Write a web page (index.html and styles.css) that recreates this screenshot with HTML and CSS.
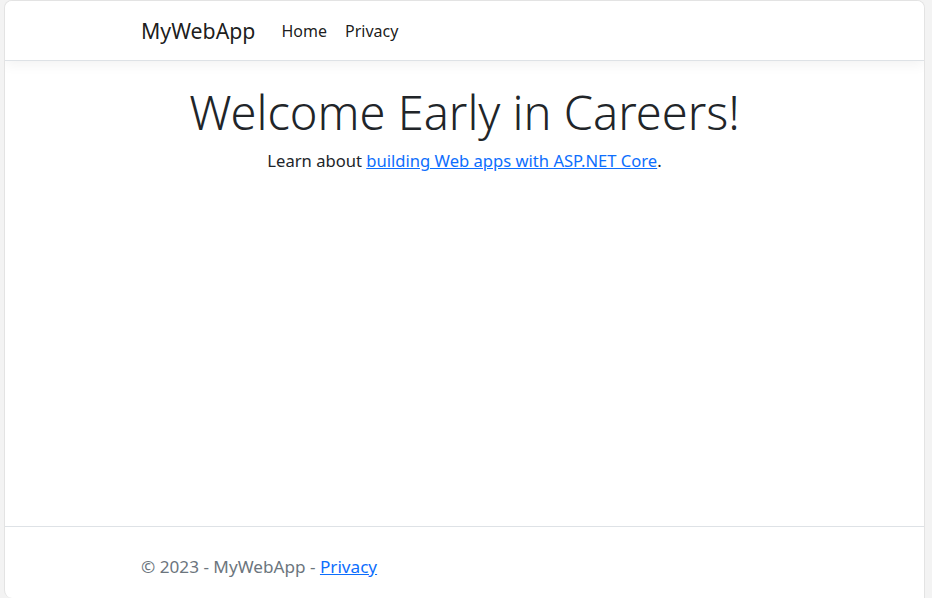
FILE: index.html
```html
<!DOCTYPE html>
<html lang="en">
<head>
<meta charset="utf-8">
<title>Home page - MyWebApp</title>
<link rel="stylesheet" href="styles.css">
</head>
<body>
<div class="window">
  <header>
    <nav class="navbar">
      <div class="container nav-inner">
        <a class="brand" href="#">MyWebApp</a>
        <ul class="nav">
          <li><a class="nav-link" href="#">Home</a></li>
          <li><a class="nav-link" href="#">Privacy</a></li>
        </ul>
      </div>
    </nav>
  </header>
  <main class="container main">
    <div class="center">
      <h1 class="display">Welcome Early in Careers!</h1>
      <p class="lead-text">Learn about <a href="#">building Web apps with ASP.NET Core</a>.</p>
    </div>
  </main>
  <footer class="footer">
    <div class="container">
      &copy; 2023 - MyWebApp - <a href="#">Privacy</a>
    </div>
  </footer>
</div>
</body>
</html>
```
FILE: styles.css
```css
* { box-sizing: border-box; }
html, body { margin: 0; height: 100%; }
body {
  background: #f3f3f3;
  padding: 0 7px 0 4px;
  font-family: "Segoe UI", "Noto Sans", "Open Sans", "Liberation Sans", sans-serif;
  color: #212529;
  font-size: 16px;
}
.window {
  height: 598px;
  background: #fff;
  border: 1px solid #e3e3e3;
  border-bottom: none;
  border-radius: 8px 8px 0 8px;
  display: flex;
  flex-direction: column;
  overflow: hidden;
}
.container {
  width: 100%;
  max-width: 671px;
  margin: 0 auto;
  padding: 0 12px;
}
.navbar {
  height: 60px;
  border-bottom: 1px solid #dee2e6;
  box-shadow: 0 4px 12px rgba(0,0,0,.05);
  background: #fff;
  position: relative;
}
.nav-inner {
  height: 100%;
  display: flex;
  align-items: center;
}
.brand {
  font-size: 21.3px;
  color: rgba(0,0,0,.9);
  text-decoration: none;
  margin-right: 17px;
}
.nav {
  list-style: none;
  margin: 0;
  padding: 0;
  display: flex;
}
.nav-link {
  display: block;
  padding: 0 9px;
  color: rgba(0,0,0,.9);
  text-decoration: none;
  font-size: 16px;
}
.main { flex: 1; }
.center { text-align: center; }
.display {
  font-size: 47px;
  font-weight: 300;
  line-height: 1.2;
  margin: 23px 0 9px;
}
.lead-text {
  margin: 0;
  font-size: 16.6px;
  line-height: 1.5;
}
a { color: #0d6efd; }
.footer {
  border-top: 1px solid #dee2e6;
  height: 72px;
  line-height: 80px;
  color: #6c757d;
  font-size: 17.15px;
}
```
